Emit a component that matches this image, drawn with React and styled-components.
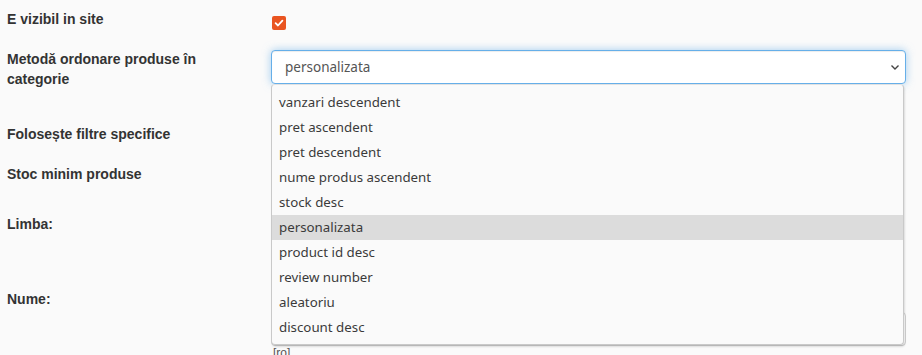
import React from "react";
import styled, { createGlobalStyle } from "styled-components";

const Global = createGlobalStyle`
  html, body { margin: 0; padding: 0; background: #fafafa; }
  body { font-family: "Liberation Sans", Arial, sans-serif; color: #333; overflow: hidden; }
`;

const Form = styled.div`
  padding: 9px 7px 0 7px;
  display: flex;
  flex-direction: column;
`;

const Row = styled.div`
  display: grid;
  grid-template-columns: 264px 635px;
  height: ${(p) => p.$h}px;
`;

const Label = styled.div`
  font-weight: bold;
  font-size: 14px;
  line-height: 20px;
  max-width: 215px;
  color: #333;
`;

const Control = styled.div`
  position: relative;
  padding-top: ${(p) => p.$top || 0}px;
`;

const Check = styled.span`
  display: inline-flex;
  align-items: center;
  justify-content: center;
  width: 14px;
  height: 14px;
  margin-left: 1px;
  border-radius: 2px;
  background: #e95420;
`;

const Select = styled.div`
  box-sizing: border-box;
  height: 34px;
  width: 635px;
  border: 1px solid #66afe9;
  border-radius: 4px;
  background: #fff;
  box-shadow: inset 0 1px 1px rgba(0,0,0,.075), 0 0 8px rgba(102,175,233,.6);
  display: flex;
  align-items: center;
  justify-content: space-between;
  padding: 0 5px 0 13px;
  font-family: "Noto Sans", "Open Sans", sans-serif;
  font-size: 13.5px;
  color: #555;
`;

const Menu = styled.ul`
  position: absolute;
  left: 0;
  top: 35px;
  width: 633px;
  box-sizing: border-box;
  margin: 0;
  padding: 5px 0 4px 0;
  list-style: none;
  background: #fafafa;
  border: 1px solid #c9c9c9;
  border-top-color: #e2e2e2;
  border-radius: 4px;
  box-shadow: 1px 2px 2px rgba(0,0,0,0.12);
  z-index: 5;
`;

const Item = styled.li`
  height: 25px;
  line-height: 25px;
  padding-left: 7px;
  font-family: "Noto Sans", "Open Sans", sans-serif;
  font-size: 13.3px;
  color: #3a3a3a;
  background: ${(p) => (p.$active ? "#dcdcdc" : "transparent")};
`;

const Input = styled.div`
  box-sizing: border-box;
  height: 34px;
  width: 635px;
  border: 1px solid #cfcfcf;
  border-radius: 4px;
  background: #fff;
`;

const Hint = styled.div`
  font-size: 12px;
  line-height: 14px;
  color: #555;
  padding-left: 2px;
`;

const options = [
  "vanzari descendent",
  "pret ascendent",
  "pret descendent",
  "nume produs ascendent",
  "stock desc",
  "personalizata",
  "product id desc",
  "review number",
  "aleatoriu",
  "discount desc",
];

export default function App() {
  return (
    <>
      <Global />
      <Form>
        <Row $h={40}>
          <Label>E vizibil in site</Label>
          <Control $top={5}>
            <Check>
              <svg width="10" height="10" viewBox="0 0 10 10">
                <path d="M1.6 5.2 L4 7.5 L8.4 2.6" fill="none" stroke="#fff" strokeWidth="1.8" strokeLinecap="round" strokeLinejoin="round" />
              </svg>
            </Check>
          </Control>
        </Row>
        <Row $h={75}>
          <Label>Metodă ordonare produse în categorie</Label>
          <Control $top={1}>
            <Select>
              <span>personalizata</span>
              <svg width="10" height="7" viewBox="0 0 10 7">
                <path d="M1.5 1.5 L5 5 L8.5 1.5" fill="none" stroke="#444" strokeWidth="1.4" />
              </svg>
            </Select>
            <Menu>
              {options.map((o) => (
                <Item key={o} $active={o === "personalizata"}>{o}</Item>
              ))}
            </Menu>
          </Control>
        </Row>
        <Row $h={40}>
          <Label>Folosește filtre specifice</Label>
          <Control />
        </Row>
        <Row $h={50}>
          <Label>Stoc minim produse</Label>
          <Control />
        </Row>
        <Row $h={75}>
          <Label>Limba:</Label>
          <Control />
        </Row>
        <Row $h={80}>
          <Label>Nume:</Label>
          <Control $top={23}>
            <Input />
            <Hint>[ro]</Hint>
          </Control>
        </Row>
      </Form>
    </>
  );
}
